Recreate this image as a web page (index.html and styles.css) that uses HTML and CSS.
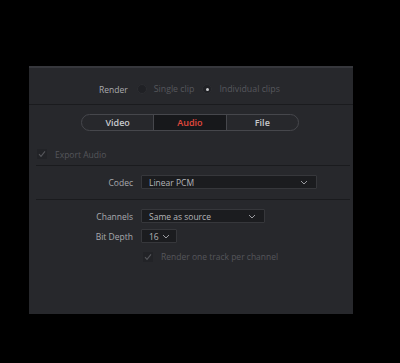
FILE: index.html
```html
<!DOCTYPE html>
<html lang="en">
<head>
    <meta charset="UTF-8">
    <title>Render settings - Audio</title>
    <link rel="stylesheet" href="styles.css">
</head>
<body>
    <div class="panel">
        <div class="render-row">
            <span class="render-label">Render</span>
            <span class="radio"></span>
            <span class="radio-text">Single clip</span>
            <span class="radio checked"></span>
            <span class="radio-text">Individual clips</span>
        </div>
        <div class="divider full"></div>

        <div class="tabs">
            <div class="tab">Video</div>
            <div class="tab active">Audio</div>
            <div class="tab">File</div>
        </div>

        <div class="check-row export">
            <span class="checkbox">
                <svg viewBox="0 0 10 10" width="10" height="10"><path d="M2 5.2 L4 7.4 L8 2.4" fill="none" stroke="#55565b" stroke-width="1.1"/></svg>
            </span>
            <span class="check-text">Export Audio</span>
        </div>
        <div class="divider"></div>

        <div class="field-grid codec">
            <label class="field-label">Codec</label>
            <div class="select wide">
                <span>Linear PCM</span>
                <svg class="chev" viewBox="0 0 8 5" width="8" height="5"><path d="M1 1 L4 4 L7 1" fill="none" stroke="#9a9ba0" stroke-width="1"/></svg>
            </div>
        </div>
        <div class="divider"></div>

        <div class="field-grid">
            <label class="field-label">Channels</label>
            <div class="select medium">
                <span>Same as source</span>
                <svg class="chev" viewBox="0 0 8 5" width="8" height="5"><path d="M1 1 L4 4 L7 1" fill="none" stroke="#9a9ba0" stroke-width="1"/></svg>
            </div>
            <label class="field-label">Bit Depth</label>
            <div class="select small">
                <span>16</span>
                <svg class="chev" viewBox="0 0 8 5" width="8" height="5"><path d="M1 1 L4 4 L7 1" fill="none" stroke="#9a9ba0" stroke-width="1"/></svg>
            </div>
        </div>

        <div class="check-row per-channel">
            <span class="checkbox">
                <svg viewBox="0 0 10 10" width="10" height="10"><path d="M2 5.2 L4 7.4 L8 2.4" fill="none" stroke="#55565b" stroke-width="1.1"/></svg>
            </span>
            <span class="check-text">Render one track per channel</span>
        </div>
    </div>
</body>
</html>
```
FILE: styles.css
```css
* {
    margin: 0;
    padding: 0;
    box-sizing: border-box;
}

body {
    background: #000;
    font-family: 'Open Sans', 'Liberation Sans', sans-serif;
    font-size: 8px;
    width: 400px;
    height: 363px;
    overflow: hidden;
}

.panel {
    margin: 66px 0 0 29px;
    width: 324px;
    height: 248px;
    background: #27282c;
    border-top: 2px solid #36373c;
    color: #b4b5b9;
}

.render-row {
    display: flex;
    align-items: center;
    height: 36px;
    padding-left: 70px;
    padding-top: 6px;
}

.render-label {
    color: #a9aaae;
    font-size: 8.5px;
    margin-right: 9px;
}

.radio {
    width: 10px;
    height: 10px;
    border-radius: 50%;
    background: #202125;
    border: 1px solid #2c2d31;
    margin-right: 7px;
    position: relative;
}

.radio.checked::after {
    content: '';
    position: absolute;
    left: 2.5px;
    top: 2.5px;
    width: 3px;
    height: 3px;
    border-radius: 50%;
    background: #c9cacd;
}

.radio-text {
    color: #56575c;
    font-size: 8.8px;
    margin-right: 8px;
}

.divider {
    height: 1px;
    background: #1a1b1e;
    margin: 0 3px 0 7px;
}

.divider.full {
    margin: 0;
}

.tabs {
    display: flex;
    width: 218px;
    height: 17px;
    margin: 9px 0 0 52px;
    border: 1px solid #46474c;
    border-radius: 9px;
    overflow: hidden;
}

.tab {
    flex: 1;
    display: flex;
    align-items: center;
    justify-content: center;
    color: #c9cacd;
    font-size: 9px;
    font-weight: 600;
}

.tab + .tab {
    border-left: 1px solid #46474c;
}

.tab.active {
    background: #17181b;
    color: #e2493d;
}

.check-row {
    display: flex;
    align-items: center;
}

.check-row.export {
    height: 34px;
    padding: 12px 0 0 8px;
}

.checkbox {
    width: 10px;
    height: 10px;
    background: #222327;
    display: flex;
    margin-right: 8px;
}

.check-text {
    color: #55565b;
    font-size: 8.5px;
}

.field-grid {
    display: grid;
    grid-template-columns: 104px auto;
    column-gap: 8px;
    row-gap: 6px;
    align-items: center;
    justify-items: start;
    padding: 9px 0 0 0;
}

.field-grid.codec {
    padding: 9px 0 10px;
}

.field-label {
    justify-self: end;
    color: #a9aaae;
    font-size: 8.5px;
}

.select {
    height: 14px;
    background: #1b1c1f;
    border: 1px solid #36373b;
    border-radius: 1px;
    display: flex;
    align-items: center;
    justify-content: space-between;
    padding: 0 8px 0 7px;
    color: #b4b5b9;
    font-size: 8.5px;
}

.select.wide {
    width: 176px;
}

.select.medium {
    width: 124px;
}

.select.small {
    width: 36px;
    padding-right: 6px;
}

.check-row.per-channel {
    padding: 8px 0 0 114px;
}
```
